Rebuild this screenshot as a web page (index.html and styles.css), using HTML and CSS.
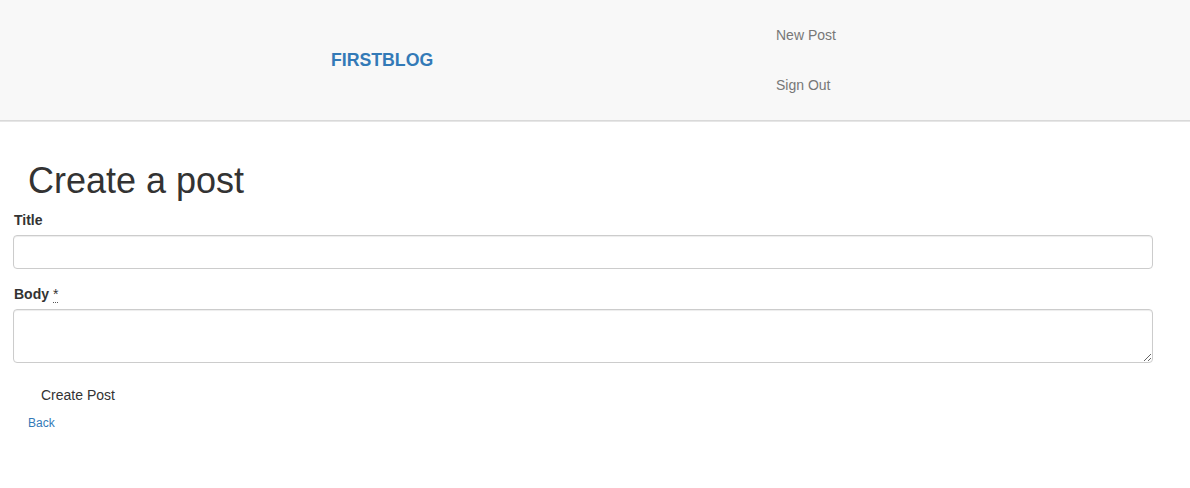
FILE: index.html
```html
<!DOCTYPE html>
<html>
<head>
<meta charset="utf-8">
<link rel="stylesheet" href="styles.css">
</head>
<body>
<header class="navbar">
  <a class="brand" href="#">FIRSTBLOG</a>
  <ul class="nav">
    <li><a href="#">New Post</a></li>
    <li><a href="#">Sign Out</a></li>
  </ul>
</header>
<main class="page">
  <h1 class="title">Create a post</h1>
  <form class="form">
    <div class="group">
      <label class="label">Title</label>
      <input class="control" type="text">
    </div>
    <div class="group">
      <label class="label">Body <abbr title="required">*</abbr></label>
      <textarea class="control area"></textarea>
    </div>
    <button class="btn" type="button">Create Post</button>
  </form>
  <a class="back" href="#">Back</a>
</main>
</body>
</html>
```
FILE: styles.css
```css
* { box-sizing: border-box; }
body {
  margin: 0;
  font-family: "Liberation Sans", Arial, sans-serif;
  font-size: 14px;
  line-height: 20px;
  color: #333;
  background: #fff;
}
.navbar {
  height: 121px;
  background: #f8f8f8;
  border-bottom: 1px solid #d9d9d9;
  box-shadow: 0 1px 0 #e6e6e6;
  display: grid;
  grid-template-columns: 430px auto;
  align-items: center;
  padding-left: 331px;
}
.brand {
  color: #337ab7;
  font-size: 17.7px;
  font-weight: bold;
  text-decoration: none;
  line-height: 20px;
}
.nav {
  list-style: none;
  margin: 0;
  padding: 0;
  display: flex;
  flex-direction: column;
}
.nav a {
  display: block;
  padding: 15px;
  color: #777;
  text-decoration: none;
  line-height: 20px;
}
.page {
  padding: 0 37px 0 13px;
}
.title {
  margin: 40px 0 9px 15px;
  font-size: 36px;
  font-weight: normal;
  line-height: 1.1;
  color: #333;
}
.form {
  display: flex;
  flex-direction: column;
}
.group {
  display: flex;
  flex-direction: column;
  margin-bottom: 15px;
}
.label {
  font-weight: bold;
  margin-bottom: 5px;
  margin-left: 1px;
  line-height: 20px;
}
.label abbr {
  font-weight: normal;
  text-decoration: none;
  border-bottom: 1px dotted #555;
  cursor: help;
}
.control {
  width: 100%;
  height: 34px;
  border: 1px solid #ccc;
  border-radius: 4px;
  box-shadow: inset 0 1px 1px rgba(0,0,0,0.075);
  background: #fff;
  padding: 6px 12px;
  font-family: inherit;
  font-size: 14px;
  margin: 0;
}
.area {
  height: 54px;
  resize: vertical;
  display: block;
}
.btn {
  align-self: flex-start;
  margin-left: 15px;
  background: transparent;
  border: 1px solid transparent;
  padding: 6px 12px;
  font-family: inherit;
  font-size: 14px;
  line-height: 20px;
  color: #333;
}
.back {
  display: inline-block;
  margin-left: 15px;
  margin-top: 2px;
  font-size: 12px;
  line-height: 17px;
  color: #337ab7;
  text-decoration: none;
}
```
